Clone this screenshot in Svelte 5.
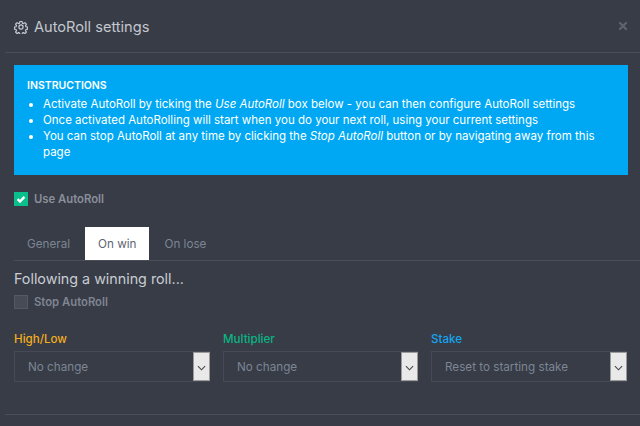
<script>
  const selects = [
    { label: 'High/Low', value: 'No change', tone: 'amber' },
    { label: 'Multiplier', value: 'No change', tone: 'green' },
    { label: 'Stake', value: 'Reset to starting stake', tone: 'blue' }
  ];
</script>

<div class="modal">
  <header class="head">
    <svg class="gear" viewBox="0 0 24 24" fill="none" stroke="currentColor" stroke-width="2" stroke-linejoin="round">
      <circle cx="12" cy="12" r="3.6" />
      <path d="M10.2 2.5h3.6l.6 2.9 1.9.8 2.5-1.6 2.5 2.5-1.6 2.5.8 1.9 2.9.6v3.6l-2.9.6-.8 1.9 1.6 2.5-2.5 2.5-2.5-1.6-1.9.8-.6 2.9h-3.6l-.6-2.9-1.9-.8-2.5 1.6-2.5-2.5 1.6-2.5-.8-1.9-2.9-.6v-3.6l2.9-.6.8-1.9-1.6-2.5 2.5-2.5 2.5 1.6 1.9-.8z" />
    </svg>
    <h1>AutoRoll settings</h1>
    <svg class="close" viewBox="0 0 8 8" stroke="currentColor" stroke-width="2.2"><path d="M0 0l8 8M8 0l-8 8" /></svg>
  </header>

  <div class="body">
    <section class="alert">
      <h2>INSTRUCTIONS</h2>
      <ul>
        <li>Activate AutoRoll by ticking the <em>Use AutoRoll</em> box below - you can then configure AutoRoll settings</li>
        <li>Once activated AutoRolling will start when you do your next roll, using your current settings</li>
        <li>You can stop AutoRoll at any time by clicking the <em>Stop AutoRoll</em> button or by navigating away from this page</li>
      </ul>
    </section>

    <div class="check use">
      <span class="box on">
        <svg viewBox="0 0 14 14" fill="none" stroke="#fff" stroke-width="2.4"><path d="M3.6 7.2l2.4 2.3 4.4-4.6" /></svg>
      </span>
      <span>Use AutoRoll</span>
    </div>

    <nav class="tabs">
      <span class="tab">General</span>
      <span class="tab active">On win</span>
      <span class="tab">On lose</span>
    </nav>

    <h3>Following a winning roll...</h3>

    <div class="check stop">
      <span class="box"></span>
      <span>Stop AutoRoll</span>
    </div>

    <div class="fields">
      {#each selects as s}
        <div class="field">
          <span class="label {s.tone}">{s.label}</span>
          <div class="select">
            <span class="value">{s.value}</span>
            <span class="arrow">
              <svg viewBox="0 0 10 6" fill="none" stroke="#444" stroke-width="1.2"><path d="M1 1l4 4 4-4" /></svg>
            </span>
          </div>
        </div>
      {/each}
    </div>
  </div>
  <div class="foot"></div>
</div>

<style>
  :global(body) {
    margin: 0;
    background: #373c47;
  }
  .modal {
    width: 640px;
    height: 426px;
    overflow: hidden;
    background: #373c47;
    font-family: "Inter", "Open Sans", sans-serif;
    font-size: 11px;
    box-sizing: border-box;
    padding-left: 5px;
  }
  .head {
    height: 53px;
    box-sizing: border-box;
    display: flex;
    align-items: center;
    padding: 4px 13px 0 9px;
    border-bottom: 1px solid #4a4e59;
    color: #c9ccd2;
    gap: 6px;
  }
  .gear {
    width: 14px;
    height: 14px;
    color: #c9ccd2;
    margin-top: -2px;
  }
  h1 {
    margin: 0;
    flex: 1;
    font-size: 14.6px;
    font-weight: 400;
    color: #c4c7ce;
    margin-top: -2px;
  }
  .close {
    width: 8px;
    height: 8px;
    color: #5f636f;
    margin-top: -4px;
  }
  .body {
    padding: 12px 0 0 9px;
    width: 614px;
  }
  .alert {
    height: 110px;
    box-sizing: border-box;
    background: #00a8f3;
    color: #fff;
    padding: 15px 13px;
  }
  h2 {
    margin: 0 0 4px;
    font-size: 10.5px;
    line-height: 12px;
    font-weight: 600;
  }
  ul {
    margin: 0;
    padding-left: 16px;
    line-height: 16px;
    font-size: 11.5px;
  }
  em {
    font-style: italic;
  }
  .check {
    display: flex;
    align-items: center;
    gap: 6px;
    font-weight: 600;
    font-size: 11.3px;
    color: #8b8f9a;
  }
  .use {
    margin-top: 17px;
    height: 14px;
  }
  .box {
    width: 14px;
    height: 14px;
    flex: none;
    box-sizing: border-box;
    background: #474b56;
    border: 1px solid #555964;
  }
  .box.on {
    background: #0bbf8c;
    border: 0;
  }
  .box svg {
    display: block;
  }
  .tabs {
    margin-top: 21px;
    height: 33px;
    width: 626px;
    display: flex;
    border-bottom: 1px solid #4a4e59;
  }
  .tab {
    padding: 0 13px;
    display: flex;
    align-items: center;
    font-size: 11.7px;
    color: #7d8593;
    margin-right: 2px;
  }
  .tab.active {
    background: #fff;
    color: #5e6673;
  }
  h3 {
    margin: 9px 0 0;
    font-size: 14.3px;
    line-height: 18px;
    font-weight: 400;
    color: #c9ccd2;
  }
  .stop {
    margin-top: 7px;
    height: 14px;
    color: #7f8591;
  }
  .fields {
    margin-top: 23px;
    display: grid;
    grid-template-columns: 196px 195px 196px;
    gap: 13px;
  }
  .label {
    display: block;
    font-size: 11.6px;
    line-height: 14px;
    font-weight: 500;
    margin-bottom: 5px;
  }
  .amber { color: #f4ac1f; }
  .green { color: #0bb484; }
  .blue { color: #16a5ee; }
  .select {
    height: 31px;
    box-sizing: border-box;
    border: 1px solid #454a55;
    display: flex;
    align-items: center;
    justify-content: space-between;
    padding-left: 13px;
  }
  .value {
    color: #7d8593;
    font-size: 11.7px;
  }
  .arrow {
    width: 17px;
    height: 29px;
    box-sizing: border-box;
    background: #e9e9e9;
    border: 1px solid #9a9a9a;
    display: flex;
    align-items: center;
    justify-content: center;
    margin-right: -1px;
  }
  .arrow svg {
    width: 9px;
    height: 6px;
    margin-top: 3px;
  }
  .foot {
    margin-top: 32px;
    border-top: 1px solid #4a4e59;
  }
</style>
